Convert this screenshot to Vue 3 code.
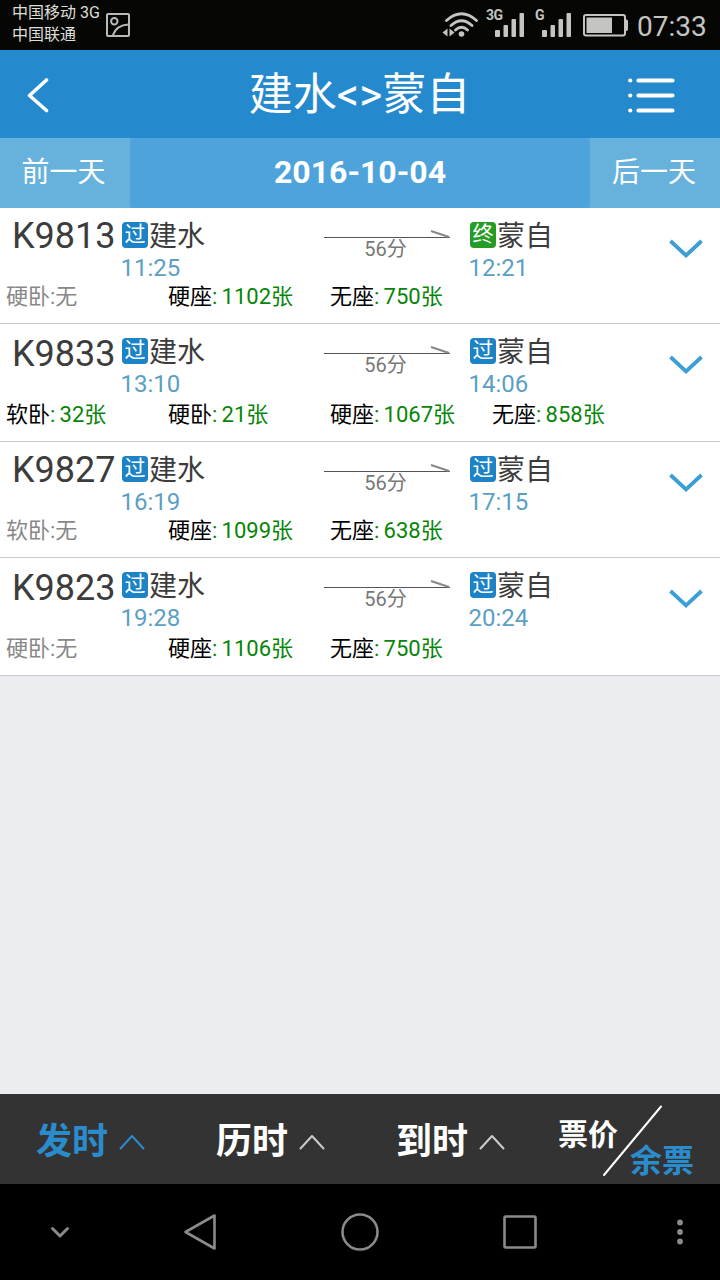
<template>
  <div class="screen">
    <div class="status-bar">
      <div class="carriers">
        <span>中国移动 3G</span>
        <span>中国联通</span>
      </div>
      <svg class="icon-picture" width="24" height="24" viewBox="0 0 24 24">
        <rect x="1" y="1" width="22" height="22" rx="1" />
        <circle cx="8.3" cy="8.3" r="3.2" />
        <path d="M7 22C9 16 14 12 22.5 11.5" />
      </svg>
      <div class="status-right">
        <svg class="icon-wifi" width="37" height="26" viewBox="0 0 37 26">
          <path d="M4.500 8.500Q19.500 -5 34.500 8.500M9 13.500Q19.500 4 30 13.500M13.500 18Q19.500 12.500 25.500 18" />
          <circle cx="19.500" cy="22" r="2.800" />
          <path class="fill" d="M0.500 20.500l5-4v8zM12.500 20.500l-5-4v8z" />
        </svg>
        <div v-for="signal in signals" :key="signal" class="signal">
          <span>{{ signal }}</span>
          <svg width="30" height="25" viewBox="0 0 30 25">
            <rect x="0" y="17" width="5" height="7" rx="1" />
            <rect x="8.500" y="12" width="4.500" height="12" rx="1" />
            <rect x="16.500" y="6" width="4.500" height="18" rx="1" />
            <rect x="24.500" y="0" width="4.500" height="24" rx="1" />
          </svg>
        </div>
        <svg class="icon-battery" width="46" height="23" viewBox="0 0 46 23">
          <rect class="outline" x="1" y="1" width="41" height="20.500" rx="2" />
          <rect x="3.500" y="3.500" width="25.500" height="15.500" />
          <path d="M42 5.500h1.500q1.500 0 1.500 2v7.500q0 2-1.500 2H42z" />
        </svg>
        <span class="clock">07:33</span>
      </div>
    </div>

    <header class="header">
      <button class="back">
        <svg width="24" height="36" viewBox="0 0 24 36">
          <path d="M19.500 3L2.500 18.500L19.500 33.500" />
        </svg>
      </button>
      <h1>建水&lt;&gt;蒙自</h1>
      <button class="menu">
        <svg width="48" height="36" viewBox="0 0 48 36">
          <path d="M10.500 3.500H44.500M10.500 18.500H44.500M10.500 33.500H44.500M2.200 3.500h.1M2.200 18.500h.1M2.200 33.500h.1" />
        </svg>
      </button>
    </header>

    <div class="date-bar">
      <button>前一天</button>
      <div class="date">2016-10-04</div>
      <button>后一天</button>
    </div>

    <ul class="trains">
      <li v-for="train in trains" :key="train.code" class="train">
        <div class="train-info">
          <span class="code">{{ train.code }}</span>
          <div class="station">
            <div class="name"><i class="badge">过</i>建水</div>
            <div class="time">{{ train.depart }}</div>
          </div>
          <div class="duration">
            <svg width="126" height="10" viewBox="0 0 126 10">
              <path class="line" d="M0 8.500H126" />
              <path class="head" d="M107 2L125 8" />
            </svg>
            <span>56分</span>
          </div>
          <div class="station">
            <div class="name">
              <i class="badge" :class="{ last: train.type === '终' }">{{ train.type }}</i>蒙自
            </div>
            <div class="time">{{ train.arrive }}</div>
          </div>
          <svg class="expand" width="34" height="20" viewBox="0 0 34 20">
            <path d="M1.500 2L17 16.500L32.500 2" />
          </svg>
        </div>
        <div class="seats">
          <div v-for="seat in train.seats" :key="seat.name" class="seat" :class="{ none: !seat.count }">
            <template v-if="seat.count">{{ seat.name }}<span class="count">: {{ seat.count }}张</span></template>
            <template v-else>{{ seat.name }}:无</template>
          </div>
        </div>
      </li>
    </ul>

    <div class="sort-bar">
      <button v-for="sort in sorts" :key="sort" class="sort" :class="{ active: sort === activeSort }" @click="activeSort = sort">
        <span>{{ sort }}</span>
        <svg width="26" height="16" viewBox="0 0 26 16">
          <path d="M1.500 14.500L13 2L24.500 14.500" />
        </svg>
      </button>
      <button class="switch">
        <span class="price">票价</span>
        <svg width="60" height="72" viewBox="0 0 60 72">
          <path d="M1 70L58 1.500" />
        </svg>
        <span class="remain">余票</span>
      </button>
    </div>

    <nav class="nav-bar">
      <svg width="20" height="14" viewBox="0 0 20 14">
        <path d="M2.500 3.500L10 11L17.500 3.500" />
      </svg>
      <svg width="34" height="38" viewBox="0 0 34 38">
        <path class="thin" d="M31.500 2.500V35.500L2.500 19Z" />
      </svg>
      <svg width="40" height="40" viewBox="0 0 40 40">
        <circle class="thin" cx="20" cy="20" r="17.500" />
      </svg>
      <svg width="34" height="34" viewBox="0 0 34 34">
        <rect class="thin" x="1.500" y="1.500" width="31" height="31" rx="1" />
      </svg>
      <svg class="dots" width="8" height="26" viewBox="0 0 8 26">
        <circle cx="4" cy="3.500" r="2.900" />
        <circle cx="4" cy="13" r="2.900" />
        <circle cx="4" cy="22.500" r="2.900" />
      </svg>
    </nav>
  </div>
</template>

<script setup>
import { ref } from "vue";

const signals = ["3G", "G"];
const sorts = ["发时", "历时", "到时"];
const activeSort = ref("发时");

const trains = [
  {
    code: "K9813",
    depart: "11:25",
    arrive: "12:21",
    type: "终",
    seats: [
      { name: "硬卧", count: 0 },
      { name: "硬座", count: 1102 },
      { name: "无座", count: 750 },
    ],
  },
  {
    code: "K9833",
    depart: "13:10",
    arrive: "14:06",
    type: "过",
    seats: [
      { name: "软卧", count: 32 },
      { name: "硬卧", count: 21 },
      { name: "硬座", count: 1067 },
      { name: "无座", count: 858 },
    ],
  },
  {
    code: "K9827",
    depart: "16:19",
    arrive: "17:15",
    type: "过",
    seats: [
      { name: "软卧", count: 0 },
      { name: "硬座", count: 1099 },
      { name: "无座", count: 638 },
    ],
  },
  {
    code: "K9823",
    depart: "19:28",
    arrive: "20:24",
    type: "过",
    seats: [
      { name: "硬卧", count: 0 },
      { name: "硬座", count: 1106 },
      { name: "无座", count: 750 },
    ],
  },
];
</script>

<style>
body {
  margin: 0;
}
</style>

<style scoped>
.screen {
  display: flex;
  flex-direction: column;
  width: 720px;
  height: 1280px;
  overflow: hidden;
  background-color: #ebedf1;
  font-family: Roboto, "Noto Sans CJK SC", sans-serif;
}

button {
  padding: 0;
  border: none;
  background: none;
  color: inherit;
  font: inherit;
}

svg {
  display: block;
  flex: none;
  fill: none;
  stroke-linecap: round;
  stroke-linejoin: round;
}

/* status bar */
.status-bar {
  display: flex;
  box-sizing: border-box;
  height: 50px;
  flex: none;
  padding-left: 12px;
  background-color: #060704;
  color: #c4c4c2;
}

.carriers {
  display: flex;
  flex-direction: column;
  width: 94px;
  padding-top: 2px;
  font-size: 16px;
  line-height: 22px;
  color: #deded9;
  white-space: nowrap;
}

.icon-picture {
  margin-top: 13px;
  stroke: #b9b9b7;
  stroke-width: 2;
}

.status-right {
  display: flex;
  margin-left: auto;
  padding-right: 13px;
}

.icon-wifi {
  margin: 12px 7px 0 0;
  stroke: #c4c4c2;
  stroke-width: 2.8;
}

.icon-wifi circle,
.icon-wifi .fill {
  fill: #c4c4c2;
  stroke: none;
}

.signal {
  display: flex;
  padding-top: 7px;
}

.signal span {
  width: 10px;
  margin-top: 1px;
  font-size: 14px;
  font-weight: 700;
  line-height: 14px;
  letter-spacing: -0.5px;
}

.signal svg {
  margin: 6px 10px 0 -1px;
  fill: #c4c4c2;
}

.signal:nth-child(3) span {
  width: 8px;
}

.icon-battery {
  margin: 14px 8px 0 1px;
  fill: #c4c4c2;
}

.icon-battery .outline {
  fill: none;
  stroke: #c4c4c2;
  stroke-width: 2;
}

.clock {
  width: 70px;
  font-size: 28px;
  line-height: 53px;
}

/* header */
.header {
  display: flex;
  flex: none;
  align-items: center;
  justify-content: space-between;
  height: 88px;
  background-color: #2589cd;
  color: #fff;
}

.header h1 {
  margin: 0 1px 0 0;
  padding-top: 2px;
  font-size: 44px;
  font-weight: 400;
  line-height: 60px;
}

.header svg {
  stroke: #fff;
  stroke-width: 3.6;
}

.header .menu svg {
  stroke-width: 4.2;
}

.back {
  width: 92px;
  padding: 2px 0 0 27px;
}

.menu {
  width: 92px;
  padding-top: 2px;
}

/* date */
.date-bar {
  display: flex;
  flex: none;
  height: 70px;
  background-color: #54a8db;
  color: #fff;
  font-size: 28px;
}

.date-bar button {
  width: 130px;
  padding-bottom: 6px;
  background-color: #67b1dd;
}

.date-bar button:first-child {
  padding-right: 3px;
}

.date-bar button:last-child {
  padding-right: 2px;
}

.date {
  flex: 1;
  border-radius: 6px;
  background-color: #4ea4da;
  font-size: 32px;
  font-weight: 700;
  line-height: 69px;
  text-align: center;
}

/* train list */
.trains {
  flex: 1;
  margin: 0;
  padding: 0;
  list-style: none;
}

.train {
  box-sizing: border-box;
  height: 116px;
  border-bottom: 1px solid #c8c8c8;
  background-color: #fff;
}

.train:nth-child(even) {
  height: 118px;
}

.train-info {
  display: grid;
  grid-template-columns: 122px 202px 146px 200px 34px;
  height: 77px;
}

.train:nth-child(even) .train-info {
  height: 79px;
}

.code {
  padding: 8px 0 0 12px;
  font-size: 36px;
  line-height: 40px;
  color: #3c3c3c;
}

.train:nth-child(even) .code {
  padding-top: 10px;
}

.name {
  display: flex;
  gap: 1px;
  padding-top: 14px;
  font-size: 28px;
  line-height: 30px;
  color: #3c3c3c;
}

.badge {
  width: 26px;
  height: 26px;
  border-radius: 4px;
  background-color: #1c83c6;
  color: #fff;
  font-size: 21px;
  font-style: normal;
  line-height: 24px;
  text-align: center;
}

.badge.last {
  background-color: #259c25;
}

.time {
  margin: 2px 0 0 -1.5px;
  font-size: 24px;
  line-height: 28px;
  color: #5b9fc5;
}

.duration {
  width: 126px;
  padding-top: 21px;
  font-size: 20px;
  line-height: 21px;
  color: #777;
  text-align: center;
}

.duration svg {
  stroke-linecap: butt;
}

.duration .line {
  stroke: #555;
  stroke-width: 1.2;
}

.duration .head {
  stroke: #888;
  stroke-width: 2;
}

.duration span {
  display: block;
  padding-right: 3px;
}

.expand {
  margin-top: 31px;
  margin-left: -1px;
  stroke: #3b9fd6;
  stroke-width: 3.8;
  stroke-linecap: butt;
  stroke-linejoin: miter;
}

.seats {
  display: grid;
  grid-template-columns: repeat(4, 162px);
  padding-left: 6px;
  font-size: 22px;
  line-height: 24px;
  color: #000;
}

.seat {
  white-space: nowrap;
}

.seat.none {
  color: #888;
}

.count {
  color: #078507;
  word-spacing: -1.2px;
}

/* sort bar */
.sort-bar {
  display: grid;
  flex: none;
  grid-template-columns: repeat(4, 180px);
  height: 90px;
  background-color: #333;
  color: #fff;
  font-weight: 700;
}

.sort {
  display: flex;
  gap: 11px;
  align-items: center;
  padding-left: 36px;
  font-size: 36px;
  line-height: 84px;
}

.sort span {
  padding-top: 5px;
}

.sort svg {
  margin-top: 6px;
  stroke: #ccc;
  stroke-width: 2;
}

.sort.active {
  color: #2b8ccd;
}

.sort.active svg {
  stroke: #2b8ccd;
}

.switch {
  display: flex;
  padding-left: 18px;
  font-size: 30px;
  line-height: 36px;
}

.switch svg {
  margin: 11px 0 0 -15px;
  stroke: #fff;
  stroke-width: 2;
}

.price {
  margin-top: 23px;
}

.remain {
  margin: 49px 0 0 -33px;
  color: #2b8ccd;
  font-size: 32px;
}

/* android navigation */
.nav-bar {
  display: grid;
  flex: none;
  grid-template-columns: 120px 160px 160px 160px 120px;
  align-items: center;
  justify-items: center;
  height: 96px;
  background-color: #000;
}

.nav-bar svg {
  stroke: #8a8a8a;
  stroke-width: 3;
}

.nav-bar .thin {
  stroke-width: 2.6;
}

.nav-bar .dots {
  margin-left: 40px;
  fill: #8a8a8a;
  stroke: none;
}
</style>
